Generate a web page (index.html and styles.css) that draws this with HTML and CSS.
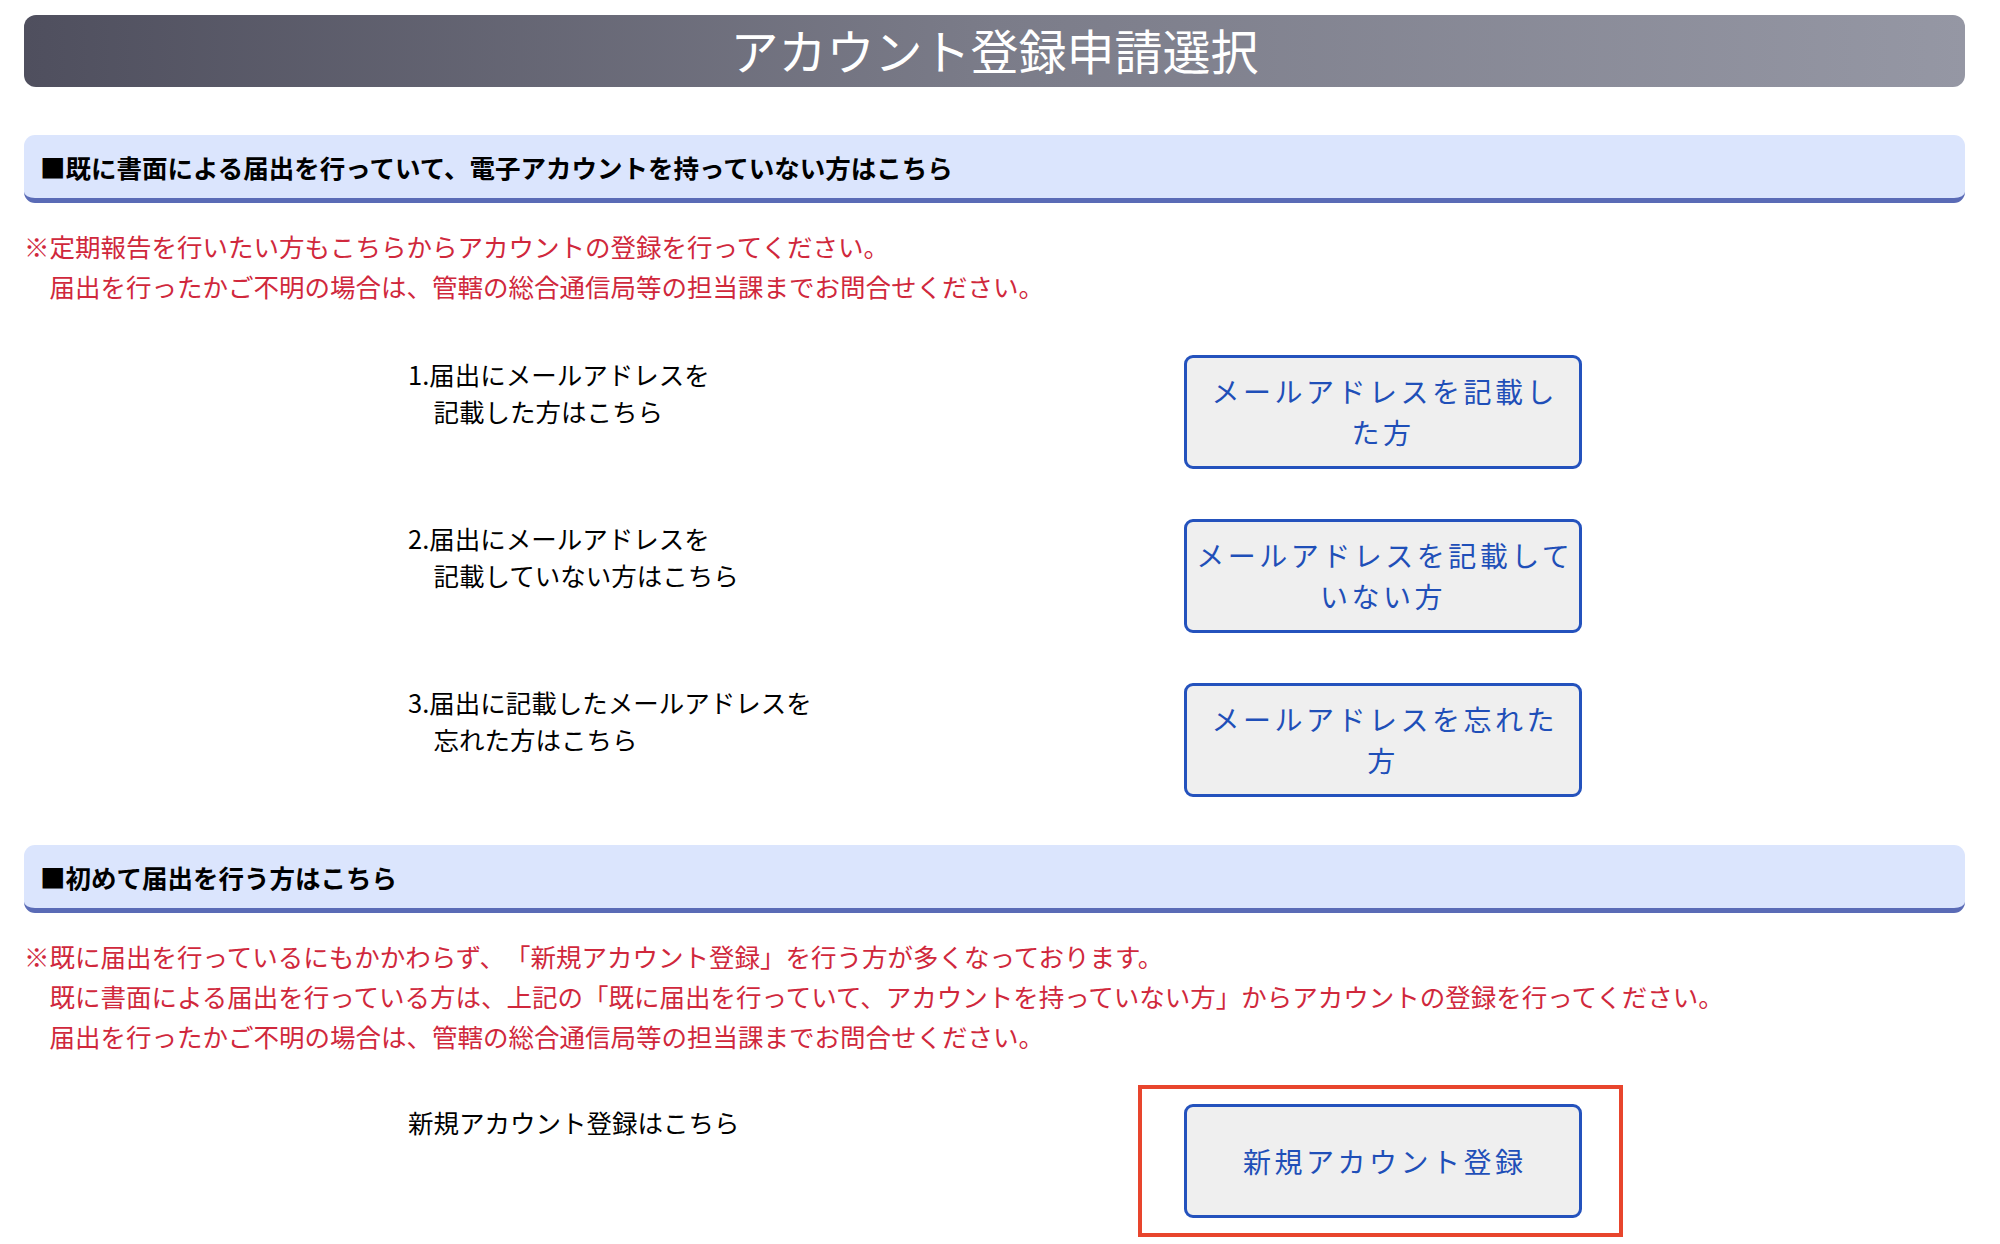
FILE: index.html
```html
<!DOCTYPE html>
<html lang="ja">
<head>
<meta charset="utf-8">
<title>アカウント登録申請選択</title>
<link rel="stylesheet" href="styles.css">
</head>
<body>
<div class="page">
  <h1 class="title">アカウント登録申請選択</h1>

  <h2 class="section">■既に書面による届出を行っていて、電子アカウントを持っていない方はこちら</h2>
  <p class="note">※定期報告を行いたい方もこちらからアカウントの登録を行ってください。<br>　届出を行ったかご不明の場合は、管轄の総合通信局等の担当課までお問合せください。</p>

  <div class="options">
    <div class="row">
      <div class="label">1.届出にメールアドレスを<br>　記載した方はこちら</div>
      <button class="btn" type="button">メールアドレスを記載し<br>た方</button>
    </div>
    <div class="row">
      <div class="label">2.届出にメールアドレスを<br>　記載していない方はこちら</div>
      <button class="btn" type="button">メールアドレスを記載して<br>いない方</button>
    </div>
    <div class="row">
      <div class="label">3.届出に記載したメールアドレスを<br>　忘れた方はこちら</div>
      <button class="btn" type="button">メールアドレスを忘れた<br>方</button>
    </div>
  </div>

  <h2 class="section">■初めて届出を行う方はこちら</h2>
  <p class="note">※既に届出を行っているにもかかわらず、「新規アカウント登録」を行う方が多くなっております。<br>　既に書面による届出を行っている方は、上記の「既に届出を行っていて、アカウントを持っていない方」からアカウントの登録を行ってください。<br>　届出を行ったかご不明の場合は、管轄の総合通信局等の担当課までお問合せください。</p>

  <div class="options options-new">
    <div class="row row-new">
      <div class="label label-new">新規アカウント登録はこちら</div>
      <div class="highlight">
        <button class="btn" type="button">新規アカウント登録</button>
      </div>
    </div>
  </div>
</div>
</body>
</html>
```

FILE: styles.css
```css
html, body {
  margin: 0;
  padding: 0;
  background: #ffffff;
}

body {
  font-family: "Noto Sans CJK JP", "Noto Sans", sans-serif;
  color: #000000;
  text-spacing-trim: space-all;
}

.page {
  width: 1941px;
  margin-left: 24px;
  padding-top: 15px;
}

.title {
  margin: 0;
  height: 72px;
  line-height: 68px;
  border-radius: 12px;
  background: linear-gradient(to right, #4f4f5e 0%, #7b7c89 50%, #9597a4 100%);
  color: #ffffff;
  font-size: 48px;
  font-weight: 400;
  text-align: center;
}

.section {
  margin: 48px 0 0 0;
  height: 63px;
  line-height: 63px;
  padding-left: 16px;
  background: #dbe5fd;
  border-bottom: 5px solid #5a6bb6;
  border-radius: 11px;
  font-size: 25.5px;
  font-weight: 700;
  color: #000000;
}

.note {
  margin: 23px 0 0 0;
  color: #d0283c;
  font-size: 25.5px;
  line-height: 40px;
}

.options {
  display: flex;
  flex-direction: column;
  gap: 50px;
  margin-top: 49px;
  padding-left: 384px;
}

.options-new {
  margin-top: 29px;
}

.row {
  display: grid;
  grid-template-columns: 776px 398px;
  align-items: start;
}

.row-new {
  grid-template-columns: 730px auto;
}

.label {
  font-size: 25.5px;
  line-height: 37px;
  padding-top: 0;
  color: #000000;
}

.label-new {
  padding-top: 18px;
}

.btn {
  box-sizing: border-box;
  width: 398px;
  height: 114px;
  margin: 0;
  padding: 0 2px;
  background: #efefef;
  border: 3px solid #2452bd;
  border-radius: 9px;
  color: #1f4fb8;
  font-family: "Noto Sans CJK JP", "Noto Sans", sans-serif;
  font-size: 28px;
  line-height: 41px;
  letter-spacing: 3.5px;
  text-indent: 3.5px;
  text-align: center;
  white-space: nowrap;
}

.highlight {
  justify-self: start;
  border: 4px solid #e8452d;
  padding: 15px 37px 15px 42px;
}
```
